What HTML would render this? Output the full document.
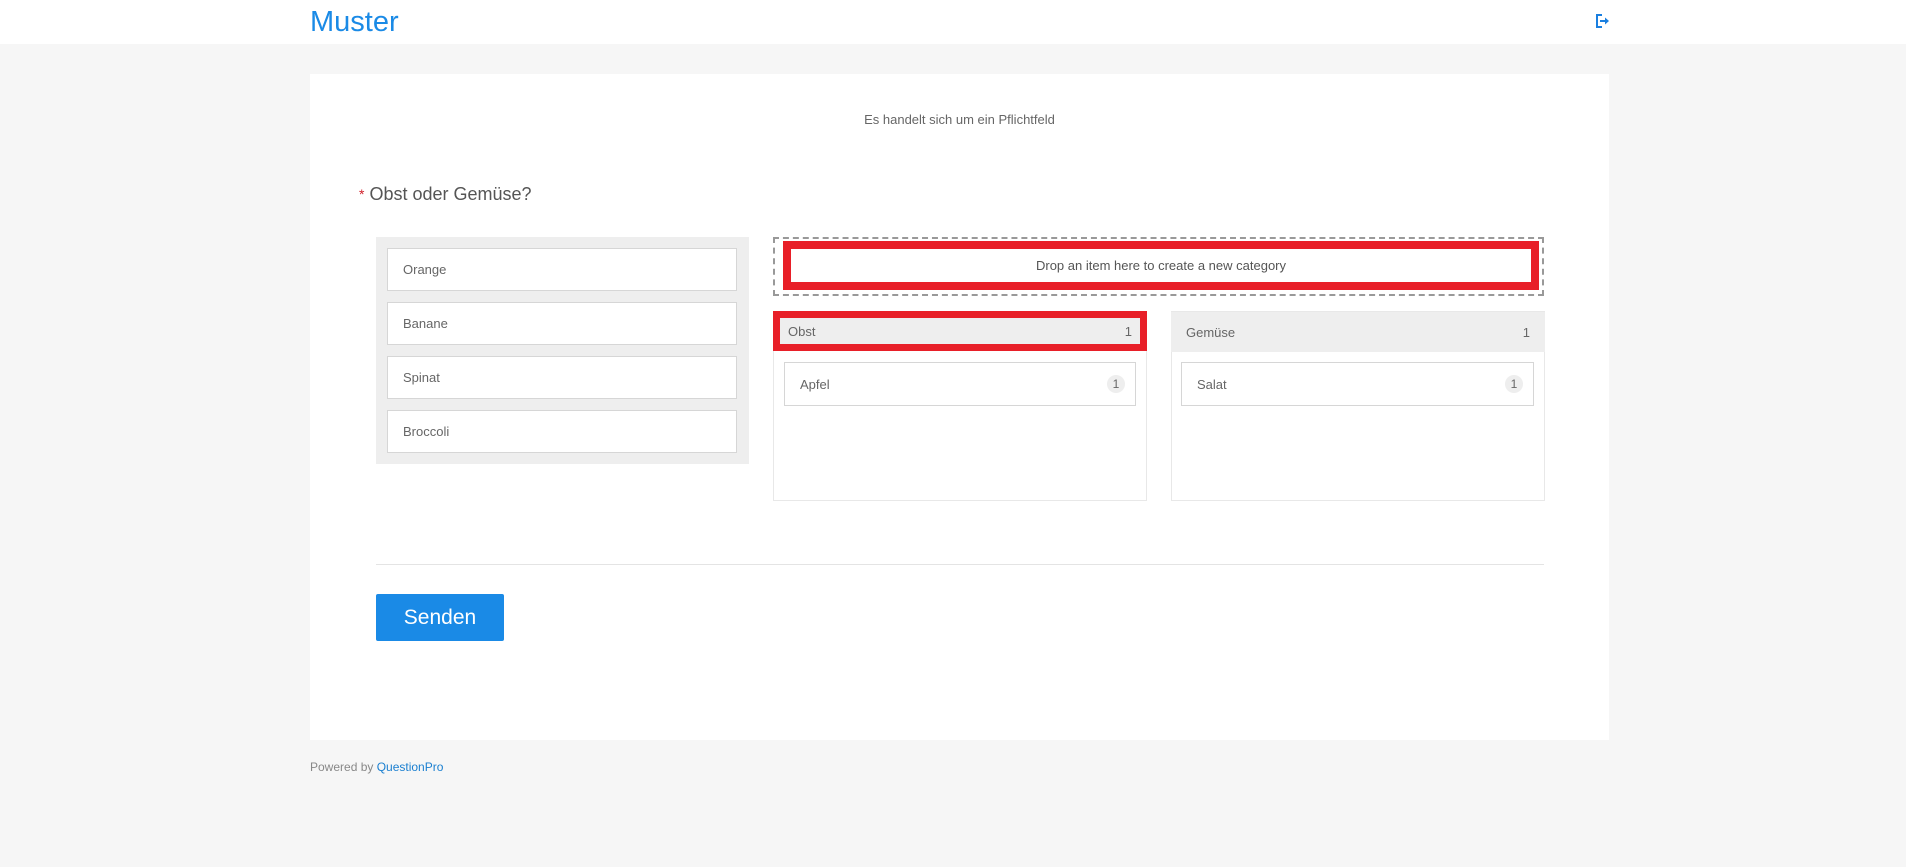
<!DOCTYPE html>
<html><head><meta charset="utf-8"><style>
*{box-sizing:border-box;margin:0;padding:0}
body{width:1906px;height:867px;background:#f6f6f6;font-family:"Liberation Sans",sans-serif;color:#555;position:relative;overflow:hidden}
.a{position:absolute}
.hdr{left:0;top:0;width:1906px;height:44px;background:#fff}
.card{left:310px;top:74px;width:1299px;height:666px;background:#fff}
.item{position:absolute;background:#fff;border:1px solid #d6d6d6;font-size:13px;padding-left:15px;display:flex;align-items:center;color:#666}
.badge{position:absolute;right:10px;top:12px;width:18px;height:18px;border-radius:9px;background:#eee;font-size:12px;text-align:center;line-height:18px;color:#666}
.col{border:1px solid #e8e8e8;background:#fff}
.ch{position:absolute;background:#eee;font-size:13px;display:flex;align-items:center;justify-content:space-between;padding:0 15px;color:#666}
</style></head><body>
<div class="a hdr"></div>
<div class="a" style="left:310px;top:6px;font-size:29px;color:#1a8ae6">Muster</div>
<svg class="a" style="left:1595px;top:13px" width="16" height="16" viewBox="0 0 16 16"><path d="M7 2H2v12h5" fill="none" stroke="#1a7fe0" stroke-width="2"/><path d="M5 8h7" stroke="#1a7fe0" stroke-width="2"/><path d="M10 4.5L14 8l-4 3.5z" fill="#1a7fe0"/></svg>
<div class="a card"></div>
<div class="a" style="left:310px;width:1299px;top:112px;text-align:center;font-size:13px;color:#666">Es handelt sich um ein Pflichtfeld</div>
<div class="a" style="left:359px;top:184px;font-size:18px;color:#555"><span style="color:#d0202a;font-size:14px;position:relative;top:-1px">*</span> Obst oder Gemüse?</div>
<div class="a" style="left:376px;top:237px;width:373px;height:227px;background:#eee"></div>
<div class="item" style="left:387px;top:248px;width:350px;height:43px">Orange</div>
<div class="item" style="left:387px;top:302px;width:350px;height:43px">Banane</div>
<div class="item" style="left:387px;top:356px;width:350px;height:43px">Spinat</div>
<div class="item" style="left:387px;top:410px;width:350px;height:43px">Broccoli</div>
<div class="a" style="left:773px;top:237px;width:771px;height:59px;border:2px dashed #999"></div>
<div class="a" style="left:783px;top:241px;width:756px;height:49px;border:8px solid #e81f28;background:#fff;font-size:13px;text-align:center;line-height:33px;color:#555">Drop an item here to create a new category</div>
<div class="a col" style="left:773px;top:311px;width:374px;height:190px"></div>
<div class="ch" style="left:773px;top:311px;width:374px;height:40px;border:7px solid #e81f28;padding:0 8px">Obst<span>1</span></div>
<div class="item" style="left:784px;top:362px;width:352px;height:44px">Apfel<span class="badge">1</span></div>
<div class="a col" style="left:1171px;top:311px;width:374px;height:190px"></div>
<div class="ch" style="left:1171px;top:312px;width:374px;height:40px">Gemüse<span>1</span></div>
<div class="item" style="left:1181px;top:362px;width:353px;height:44px">Salat<span class="badge">1</span></div>
<div class="a" style="left:376px;top:564px;width:1168px;height:1px;background:#e4e4e4"></div>
<div class="a" style="left:376px;top:594px;width:128px;height:47px;background:#1a8ae6;border-radius:2px;color:#fff;font-size:21px;text-align:center;line-height:47px">Senden</div>
<div class="a" style="left:310px;top:760px;font-size:12px;color:#888">Powered by <span style="color:#1a7fd0">QuestionPro</span></div>
</body></html>
